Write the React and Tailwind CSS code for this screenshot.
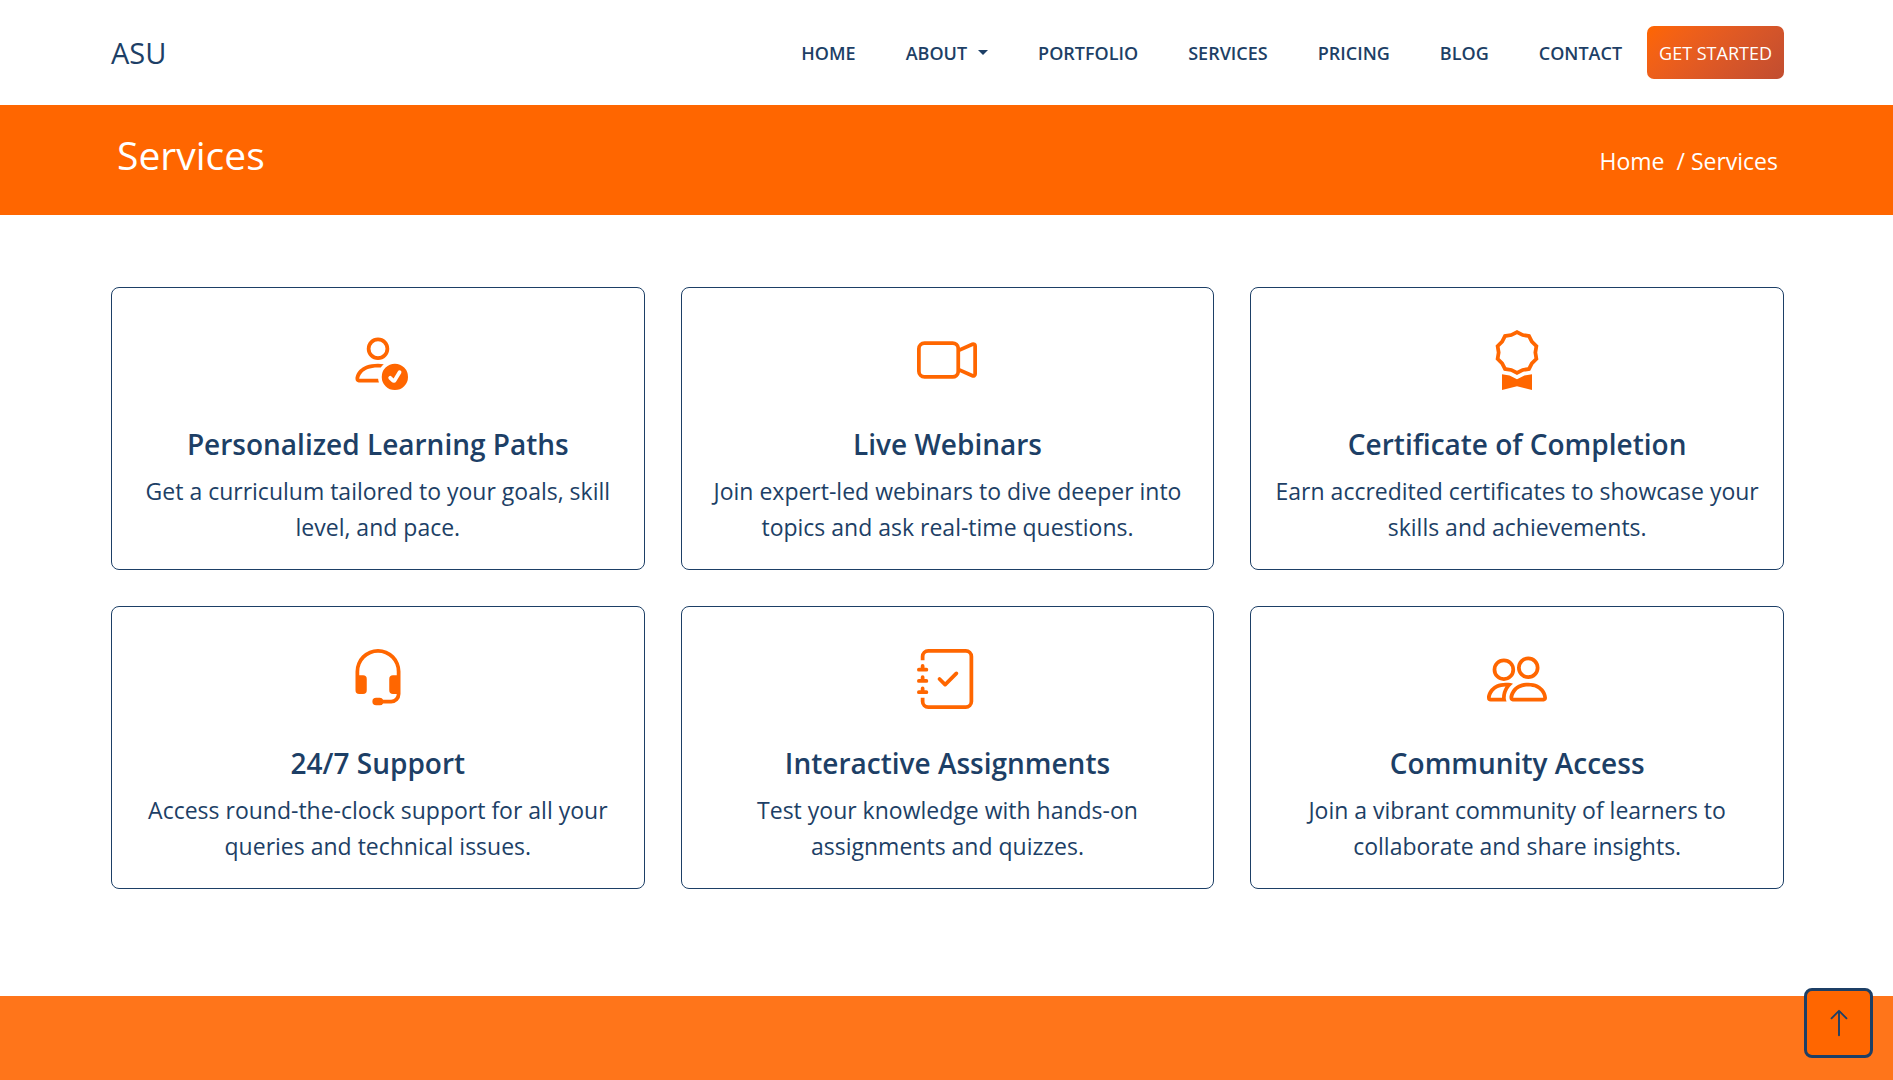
import {
  BsArrowUp,
  BsAward,
  BsCameraVideo,
  BsHeadset,
  BsJournalCheck,
  BsPeople,
  BsPersonCheck,
} from "react-icons/bs";

const navLinks = ["HOME", "ABOUT", "PORTFOLIO", "SERVICES", "PRICING", "BLOG", "CONTACT"];

const services = [
  {
    icon: BsPersonCheck,
    title: "Personalized Learning Paths",
    text: "Get a curriculum tailored to your goals, skill level, and pace.",
  },
  {
    icon: BsCameraVideo,
    title: "Live Webinars",
    text: "Join expert-led webinars to dive deeper into topics and ask real-time questions.",
  },
  {
    icon: BsAward,
    title: "Certificate of Completion",
    text: "Earn accredited certificates to showcase your skills and achievements.",
  },
  {
    icon: BsHeadset,
    title: "24/7 Support",
    text: "Access round-the-clock support for all your queries and technical issues.",
  },
  {
    icon: BsJournalCheck,
    title: "Interactive Assignments",
    text: "Test your knowledge with hands-on assignments and quizzes.",
  },
  {
    icon: BsPeople,
    title: "Community Access",
    text: "Join a vibrant community of learners to collaborate and share insights.",
  },
];

function Navbar() {
  return (
    <header className="flex items-center justify-between bg-white py-[26px] pr-[109px] pl-[111px]">
      <a href="#home" className="text-[29px] leading-9">
        ASU
      </a>
      <nav className="flex items-center">
        {navLinks.map((label) => (
          <a
            key={label}
            href={`#${label.toLowerCase()}`}
            className="flex items-center px-[25px] text-lg leading-7 font-semibold"
          >
            {label}
            {label === "ABOUT" && (
              <span className="ml-[11px] border-x-5 border-t-5 border-x-transparent border-t-[#1d3f66]" />
            )}
          </a>
        ))}
        <button
          type="button"
          className="rounded-[7px] bg-linear-135 from-[#ff6600] to-[#c14d30] px-3 pt-[13px] pb-3 text-lg leading-7 text-white"
        >
          GET STARTED
        </button>
      </nav>
    </header>
  );
}

function PageTitle() {
  return (
    <section className="flex items-end justify-between bg-[#ff6600] pt-[25px] pr-[115px] pb-[35px] pl-[117px] text-white">
      <h1 className="text-[39px] leading-[50px]">Services</h1>
      <nav aria-label="Breadcrumb" className="flex text-[23px] leading-[38px]">
        <a href="#home" className="mr-3">
          Home
        </a>
        <span>/ Services</span>
      </nav>
    </section>
  );
}

function ServiceCard({ icon: Icon, title, text }) {
  return (
    <article className="flex flex-col items-center rounded-lg border border-[#1d3f66] bg-white px-5 pt-[42px] pb-6 text-center">
      <Icon className="size-[60px] text-[#ff6600]" />
      <h2 className="mt-9 mb-[11px] text-[28px] leading-9 font-semibold">{title}</h2>
      <p className="text-[23px] leading-9">{text}</p>
    </article>
  );
}

export default function App() {
  return (
    <div className="flex min-h-screen flex-col bg-white font-['Open_Sans','Noto_Sans',sans-serif] text-[#1d3f66]">
      <Navbar />
      <PageTitle />
      <main className="grid grid-cols-3 gap-9 pt-[72px] pr-[109px] pb-[107px] pl-[111px]">
        {services.map((service) => (
          <ServiceCard key={service.title} {...service} />
        ))}
      </main>
      <footer className="flex-1 bg-[#ff751a]" />
      <button
        type="button"
        aria-label="Back to top"
        className="fixed right-5 bottom-[22px] flex h-[70px] w-[69px] items-center justify-center rounded-lg border-3 border-[#1d3f66] bg-[#ff6600]"
      >
        <BsArrowUp className="size-[30px]" />
      </button>
    </div>
  );
}
